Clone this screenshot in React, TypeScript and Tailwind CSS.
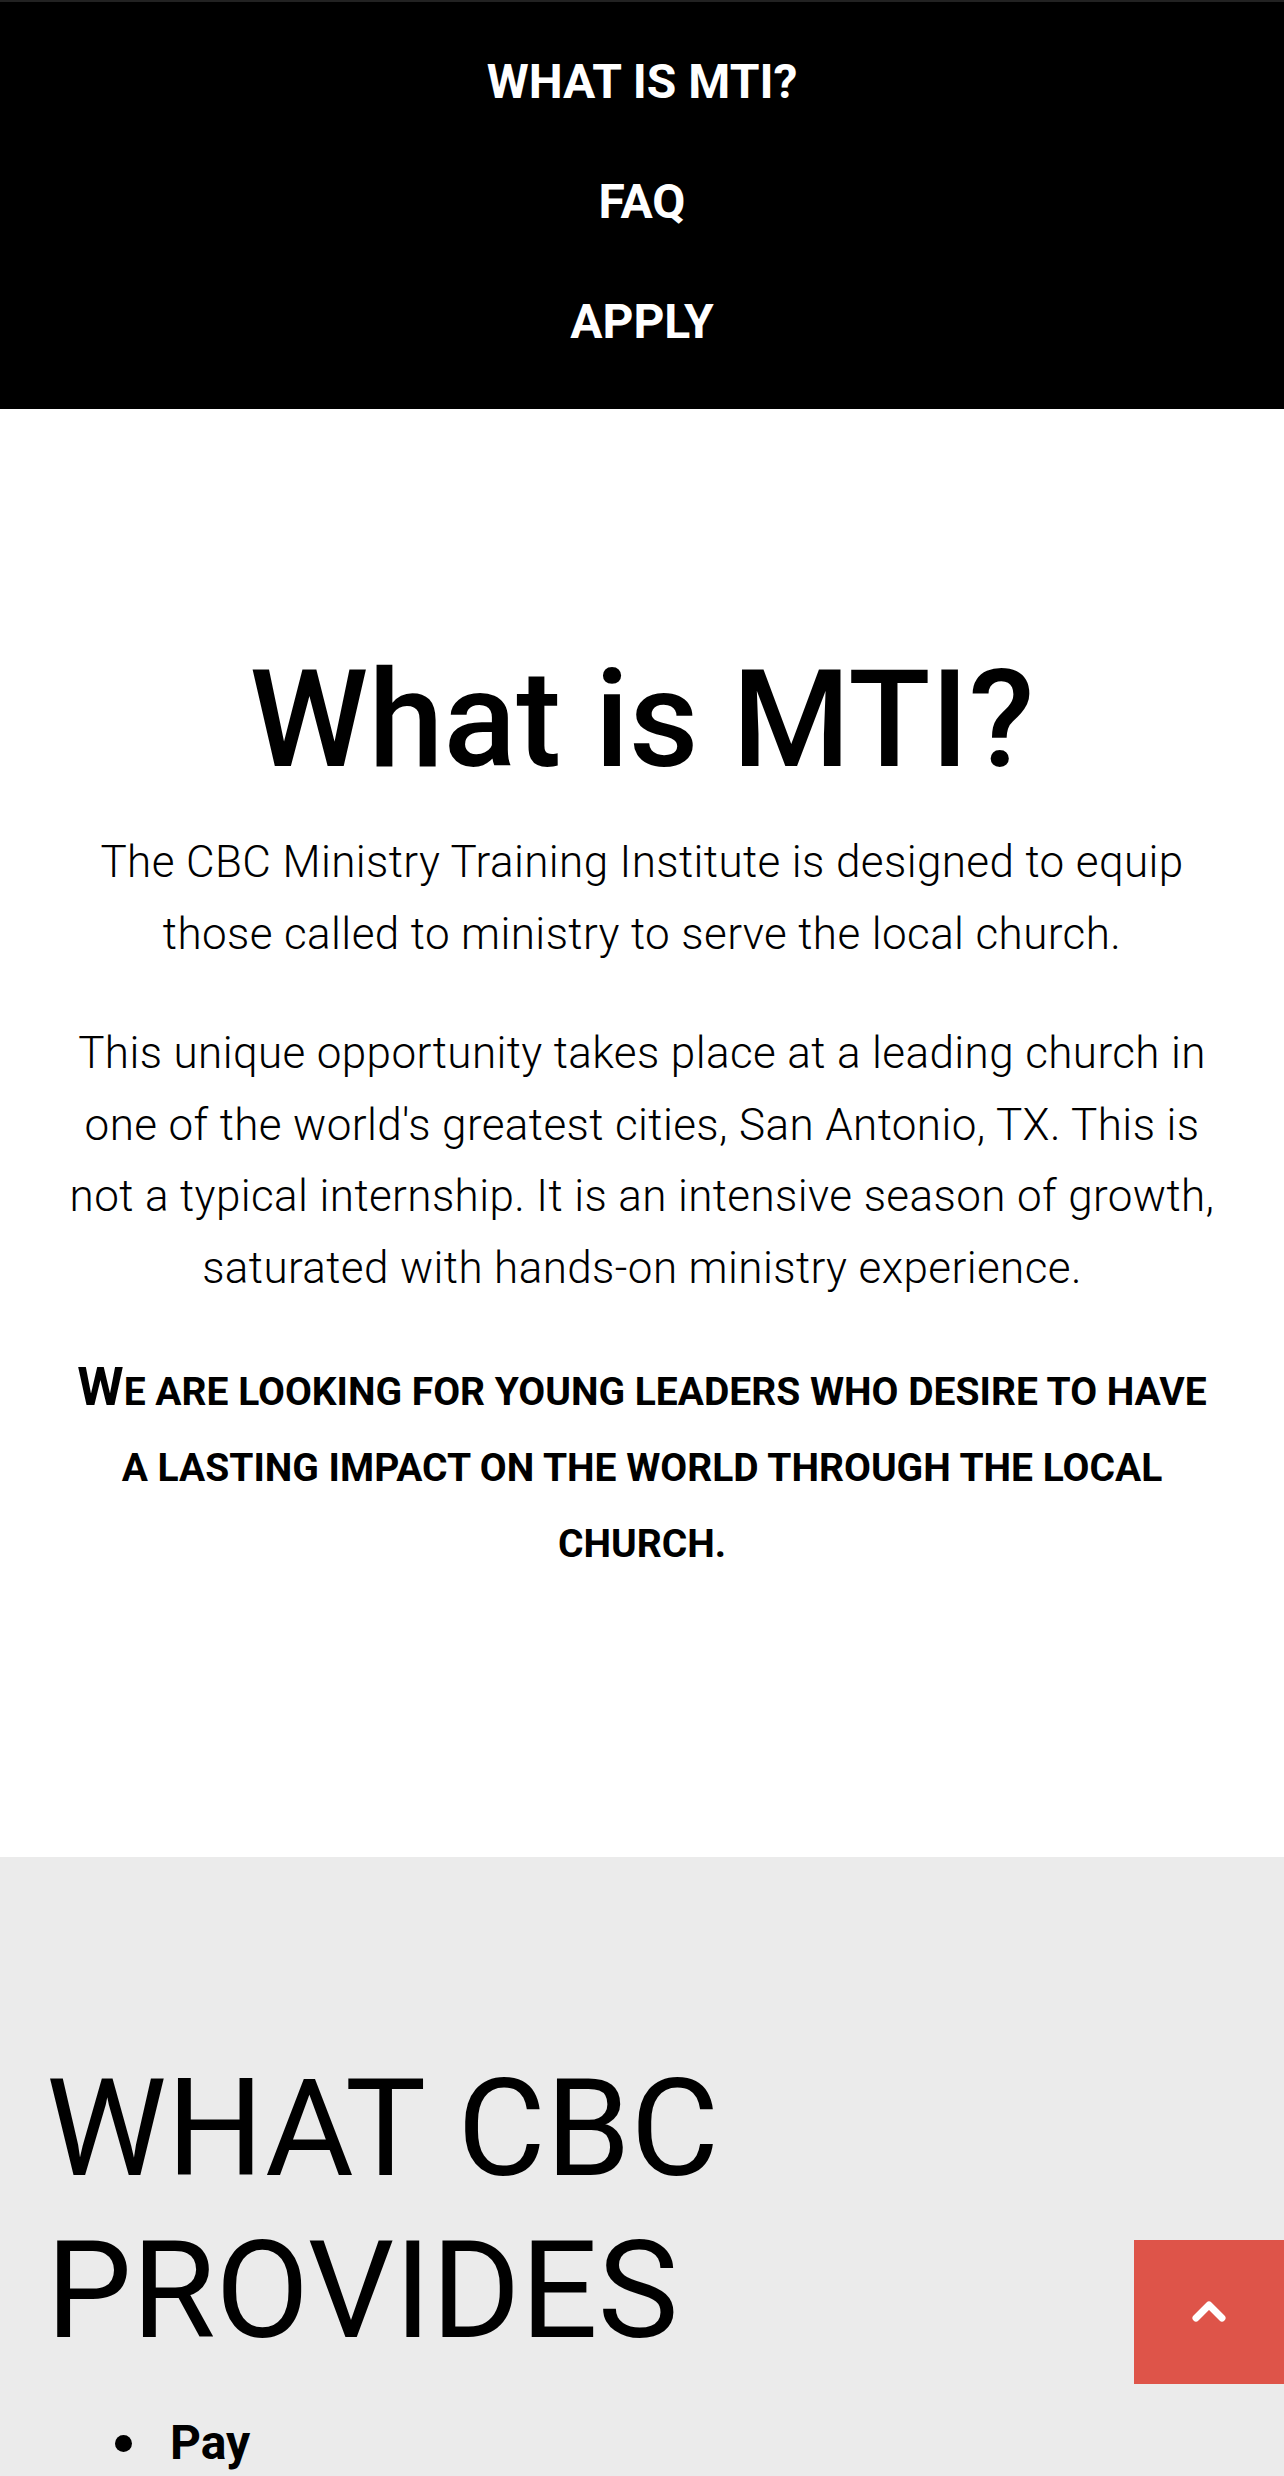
import React from 'react';

const navLinks = ['What is MTI?', 'FAQ', 'Apply'];
const provides = ['Pay'];

const ScrollTop = () => (
  <button
    className="fixed right-0 bottom-[92px] w-[150px] h-[144px] bg-[#de5449] flex items-center justify-center"
    aria-label="Back to top"
  >
    <svg width="40" height="30" viewBox="0 0 40 30" fill="none">
      <polyline
        points="7,21 20,8 33,21"
        stroke="#fff"
        strokeWidth="7"
        strokeLinecap="round"
        strokeLinejoin="round"
      />
    </svg>
  </button>
);

const App = () => {
  return (
    <div className="min-h-screen bg-white text-black font-['Roboto','Liberation_Sans',sans-serif]">
      {/* Mobile nav */}
      <nav className="bg-black border-t-2 border-[#222] pt-[20px] pb-[27px]">
        <ul className="flex flex-col items-center">
          {navLinks.map((link) => (
            <li key={link} className="h-[120px] flex items-center">
              <a href="#" className="text-white text-[48px] font-bold uppercase leading-none">
                {link}
              </a>
            </li>
          ))}
        </ul>
      </nav>

      {/* What is MTI */}
      <section className="px-[60px] pt-[235px] pb-[275px] text-center">
        <h1 className="text-[135px] leading-[152px] font-medium">What is MTI?</h1>
        <p className="mt-[31px] text-[44px] leading-[71.5px] tracking-[0.4px] font-light">
          The CBC Ministry Training Institute is designed to equip those called to ministry to serve the local church.
        </p>
        <p className="mt-[48px] text-[44px] leading-[71.5px] tracking-[0.4px] font-light">
          This unique opportunity takes place at a leading church in one of the world's greatest cities, San Antonio, TX. This is not a typical internship. It is an intensive season of growth, saturated with hands-on ministry experience.
        </p>
        <p className="mt-[50px] text-[39px] leading-[76px] font-bold uppercase">
          <span className="text-[53px] leading-none">W</span>e are looking for young leaders who desire to have a lasting impact on the world through the local church.
        </p>
      </section>

      {/* What CBC provides */}
      <section className="bg-[#ebebeb] px-[46px] pt-[191px] pb-[200px]">
        <h2 className="text-[136px] leading-[162px] font-normal uppercase max-w-[800px]">What CBC Provides</h2>
        <ul className="mt-[35px] pl-[69px]">
          {provides.map((item) => (
            <li key={item} className="flex items-center gap-[38px] text-[48px] leading-[72px] font-bold">
              <span className="w-[17px] h-[17px] rounded-full bg-black shrink-0" />
              {item}
            </li>
          ))}
        </ul>
      </section>

      <ScrollTop />
    </div>
  );
};

export default App;
